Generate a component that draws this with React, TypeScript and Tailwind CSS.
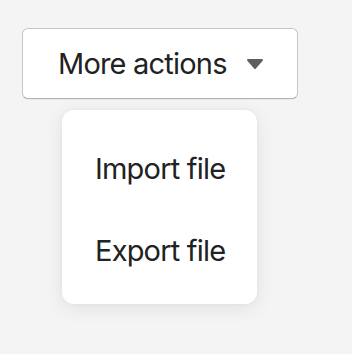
import { useState } from "react";

const ITEMS = ["Import file", "Export file"];

export default function App() {
  const [open, setOpen] = useState(true);

  return (
    <div className="min-h-[354px] bg-[#f4f4f4] pt-[28px] pl-[22px] font-['Inter',sans-serif] text-[#202223]">
      {/* Trigger */}
      <button
        type="button"
        onClick={() => setOpen(!open)}
        className="flex h-[71px] w-[276px] items-center rounded-[6px] border border-[#c4c6c9] border-b-[#b0b3b7] bg-white pl-[35px] text-[29px] leading-none shadow-[0_1px_0_rgba(0,0,0,0.05)]"
      >
        <span className="tracking-[-0.8px]">More actions</span>
        <svg className="ml-[20px] h-[10px] w-[16px] text-[#5c5f62]" viewBox="0 0 16 10" fill="currentColor">
          <path d="M1.2 0h13.6c1 0 1.5 1.1.9 1.8L8.9 9.4a1.2 1.2 0 0 1-1.8 0L.3 1.8C-.3 1.1.2 0 1.2 0z" />
        </svg>
      </button>

      {/* Menu */}
      {open && (
        <div className="ml-[40px] mt-[11px] w-[195px] rounded-[12px] bg-white pt-[17px] pb-[13px] shadow-[0_4px_20px_rgba(0,0,0,0.08),0_0_5px_rgba(0,0,0,0.04)]">
          {ITEMS.map((item) => (
            <div key={item} className="flex h-[82px] items-center pl-[33px] text-[29px] leading-none tracking-[-0.8px]">
              {item}
            </div>
          ))}
        </div>
      )}
    </div>
  );
}
